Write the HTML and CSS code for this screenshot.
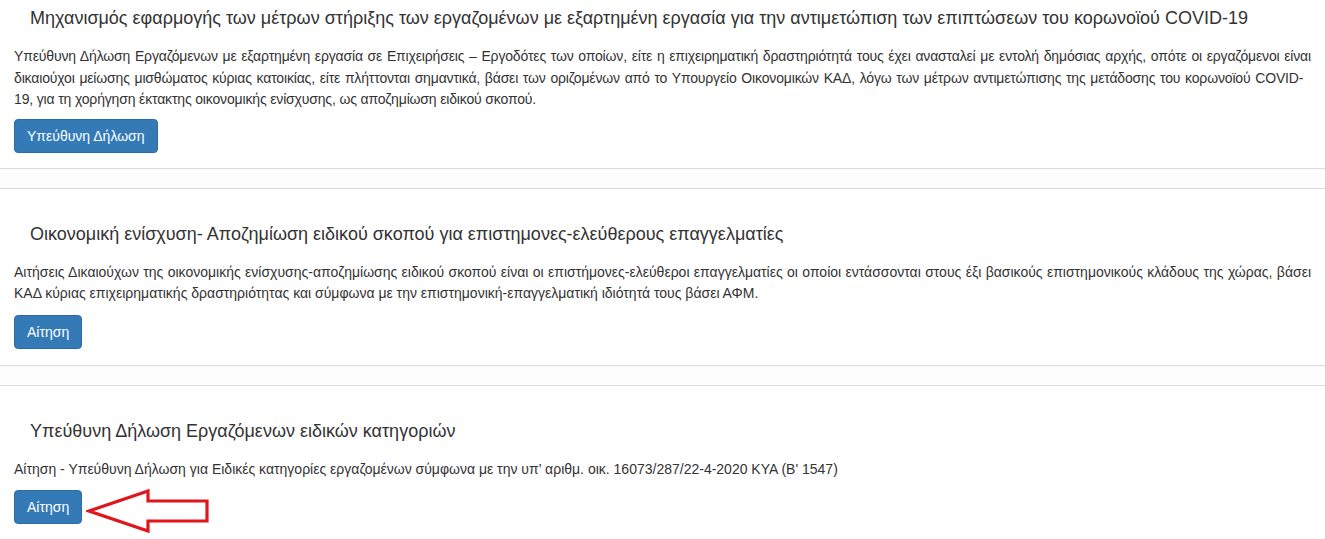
FILE: index.html
```html
<!DOCTYPE html>
<html lang="el">
<head>
<meta charset="utf-8">
<title>Υπηρεσίες</title>
<link rel="stylesheet" href="styles.css">
</head>
<body>
<div class="panel panel-first">
  <h3 class="panel-title">Μηχανισμός εφαρμογής των μέτρων στήριξης των εργαζομένων με εξαρτημένη εργασία για την αντιμετώπιση των επιπτώσεων του κορωνοϊού COVID-19</h3>
  <p class="panel-text panel-text-tight">Υπεύθυνη Δήλωση Εργαζόμενων με εξαρτημένη εργασία σε Επιχειρήσεις – Εργοδότες των οποίων, είτε η επιχειρηματική δραστηριότητά τους έχει ανασταλεί με εντολή δημόσιας αρχής, οπότε οι εργαζόμενοι είναι <span class="line-fill">δικαιούχοι μείωσης μισθώματος κύριας κατοικίας, είτε πλήττονται σημαντικά, βάσει των οριζομένων από το Υπουργείο Οικονομικών ΚΑΔ, λόγω των μέτρων αντιμετώπισης της μετάδοσης του κορωνοϊού COVID-</span><br>19, για τη χορήγηση έκτακτης οικονομικής ενίσχυσης, ως αποζημίωση ειδικού σκοπού.</p>
  <a class="btn" href="#">Υπεύθυνη Δήλωση</a>
</div>
<div class="divider"></div>
<div class="panel">
  <h3 class="panel-title">Οικονομική ενίσχυση- Αποζημίωση ειδικού σκοπού για επιστημονες-ελεύθερους επαγγελματίες</h3>
  <p class="panel-text">Αιτήσεις Δικαιούχων της οικονομικής ενίσχυσης-αποζημίωσης ειδικού σκοπού είναι οι επιστήμονες-ελεύθεροι επαγγελματίες οι οποίοι εντάσσονται στους έξι βασικούς επιστημονικούς κλάδους της χώρας, βάσει ΚΑΔ κύριας επιχειρηματικής δραστηριότητας και σύμφωνα με την επιστημονική-επαγγελματική ιδιότητά τους βάσει ΑΦΜ.</p>
  <a class="btn" href="#">Αίτηση</a>
</div>
<div class="divider"></div>
<div class="panel">
  <h3 class="panel-title">Υπεύθυνη Δήλωση Εργαζόμενων ειδικών κατηγοριών</h3>
  <p class="panel-text">Αίτηση - Υπεύθυνη Δήλωση για Ειδικές κατηγορίες εργαζομένων σύμφωνα με την υπ’ αριθμ. οικ. 16073/287/22-4-2020 ΚΥΑ (Β' 1547)</p>
  <div class="btn-wrap">
    <a class="btn" href="#">Αίτηση</a>
    <svg class="arrow" width="124" height="46" viewBox="0 0 124 46">
      <polygon points="3,23 62,3 62,13 121,13 121,33 62,33 62,43" fill="none" stroke="#e0161d" stroke-width="3.2" stroke-linejoin="miter"/>
    </svg>
  </div>
</div>
</body>
</html>
```
FILE: styles.css
```css
html, body {
  margin: 0;
  padding: 0;
  background: #fff;
}
body {
  font-family: "Liberation Sans", Arial, sans-serif;
  font-size: 14px;
  color: #333;
}
.panel {
  background: #fff;
  padding: 34px 14px 16px;
  box-shadow: 0 1px 1px rgba(0, 0, 0, 0.12);
  position: relative;
}
.panel-first {
  padding-top: 7px;
  padding-bottom: 15px;
}
.panel-title {
  margin: 0 0 17px 16px;
  font-size: 18px;
  font-weight: normal;
  line-height: 22px;
  color: #333;
}
.panel-text {
  margin: 0 0 10px;
  line-height: 21.5px;
  text-align: justify;
}
.panel-text-tight {
  letter-spacing: -0.16px;
  margin-bottom: 8px;
}
.line-fill {
  word-spacing: 1px;
}
.btn {
  display: inline-block;
  padding: 6px 12px;
  font-size: 14px;
  line-height: 20px;
  color: #fff;
  background: #337ab7;
  border: 1px solid #2e6da4;
  border-radius: 4px;
  text-decoration: none;
}
.divider {
  height: 20px;
  background: #fdfdfd;
  border-bottom: 1px solid #dcdcdc;
}
.btn-wrap {
  position: relative;
}
.arrow {
  position: absolute;
  left: 72px;
  top: -2px;
}
```
